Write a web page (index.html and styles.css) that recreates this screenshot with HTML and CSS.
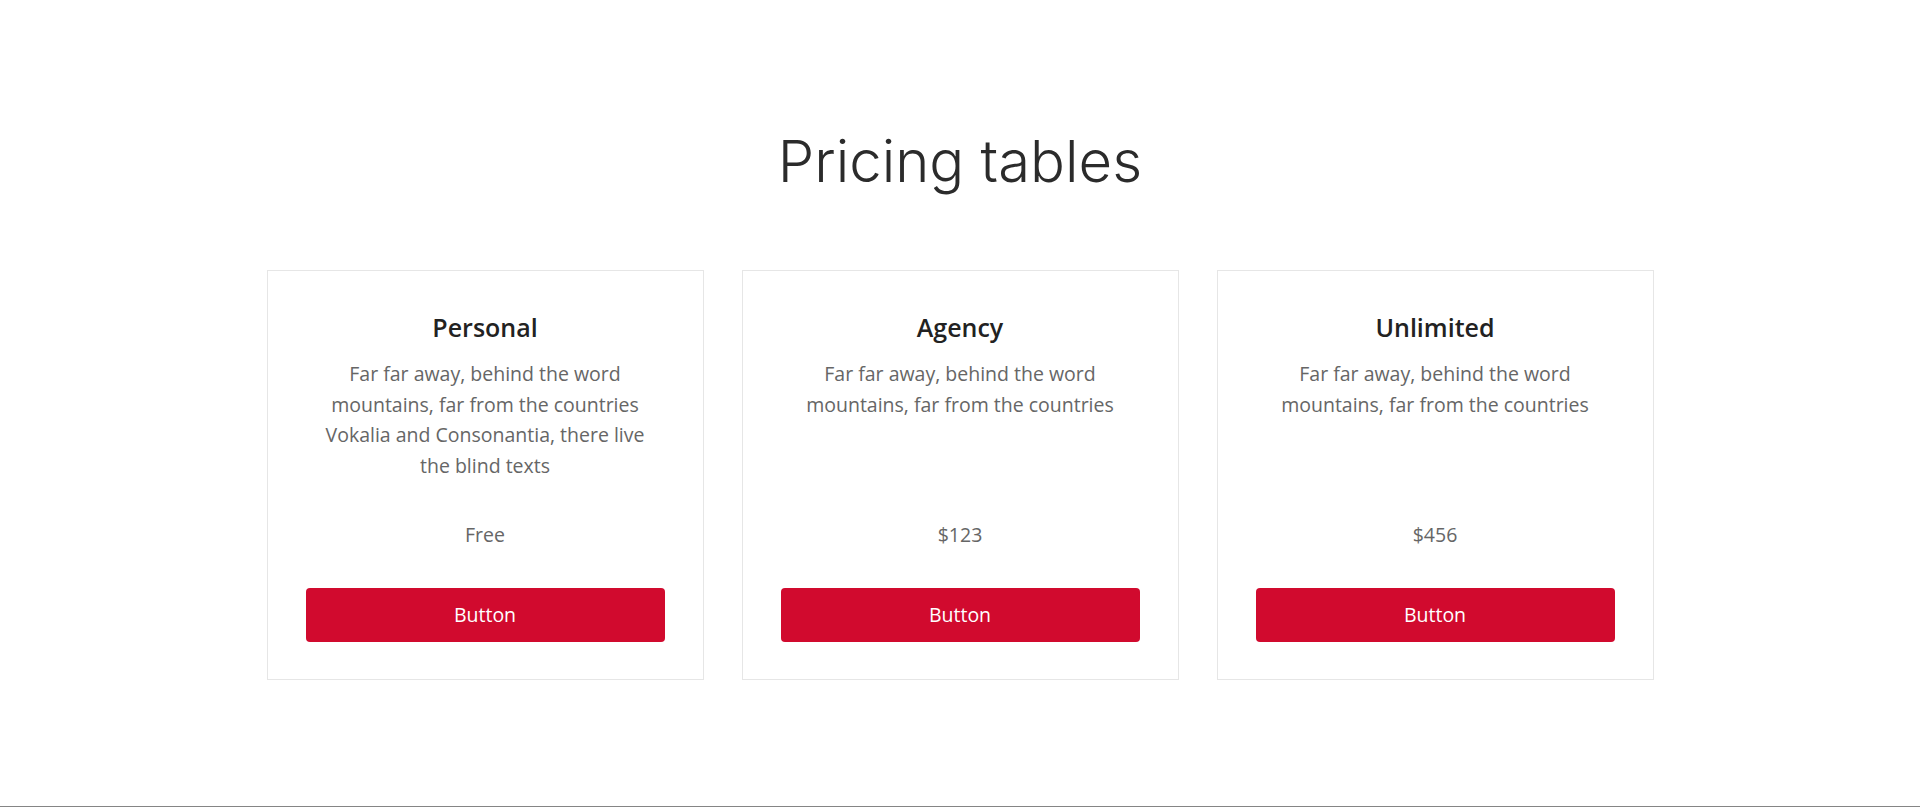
FILE: index.html
```html
<!DOCTYPE html>
<html lang="en">
<head>
<meta charset="utf-8">
<title>Pricing tables</title>
<link rel="stylesheet" href="styles.css">
</head>
<body>
<section class="pricing">
  <h2 class="pricing-title">Pricing tables</h2>
  <div class="pricing-grid">
    <div class="plan">
      <h3 class="plan-name">Personal</h3>
      <p class="plan-desc">Far far away, behind the word mountains, far from the countries Vokalia and Consonantia, there live the blind texts</p>
      <div class="plan-price">Free</div>
      <a class="plan-btn" href="#">Button</a>
    </div>
    <div class="plan">
      <h3 class="plan-name">Agency</h3>
      <p class="plan-desc">Far far away, behind the word mountains, far from the countries</p>
      <div class="plan-price">$123</div>
      <a class="plan-btn" href="#">Button</a>
    </div>
    <div class="plan">
      <h3 class="plan-name">Unlimited</h3>
      <p class="plan-desc">Far far away, behind the word mountains, far from the countries</p>
      <div class="plan-price">$456</div>
      <a class="plan-btn" href="#">Button</a>
    </div>
  </div>
</section>
<footer class="page-foot"></footer>
</body>
</html>
```
FILE: styles.css
```css
* { box-sizing: border-box; }
html, body { margin: 0; padding: 0; background: #fff; }
body {
  font-family: "Open Sans", "Noto Sans", sans-serif;
  color: #666;
  overflow: hidden;
}
.pricing {
  height: 806px;
  padding-top: 127px;
}
.pricing-title {
  margin: 0 0 73px;
  text-align: center;
  font-family: Inter, "Noto Sans", sans-serif;
  font-weight: 300;
  font-size: 58px;
  line-height: 1.2;
  color: #2b2b2b;
  letter-spacing: 0;
}
.pricing-grid {
  display: grid;
  grid-template-columns: repeat(3, 437px);
  column-gap: 38px;
  justify-content: center;
}
.plan {
  display: flex;
  flex-direction: column;
  border: 1px solid #e6e6e6;
  padding: 42px 38px 37px;
  text-align: center;
}
.plan-name {
  margin: 0 0 17.5px;
  font-size: 25px;
  line-height: 28.8px;
  font-weight: 600;
  color: #222;
}
.plan-desc {
  margin: 0;
  padding: 0 10px;
  flex: 1 0 auto;
  font-size: 19.5px;
  line-height: 30.72px;
  color: #666;
}
.plan-price {
  margin-top: 38.7px;
  font-size: 19.5px;
  line-height: 30.72px;
  color: #666;
}
.plan-btn {
  display: block;
  margin-top: 37px;
  padding: 11.6px 0;
  background: #d10a2e;
  color: #fff;
  border-radius: 4px;
  font-size: 19.5px;
  line-height: 30.72px;
  text-decoration: none;
}
.page-foot {
  border-top: 1px solid #858585;
  height: 1px;
}
```
